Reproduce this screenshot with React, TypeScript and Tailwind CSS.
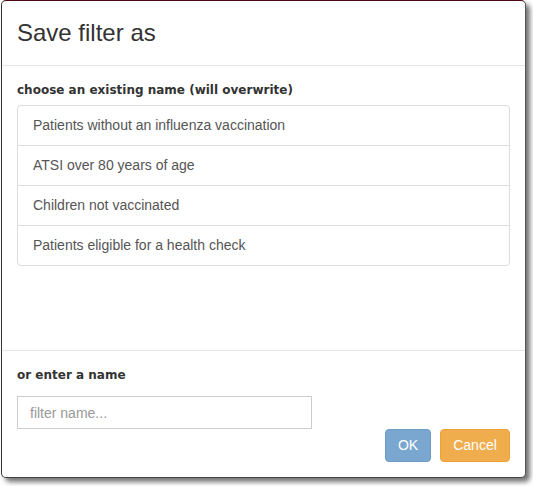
const existingNames = [
  "Patients without an influenza vaccination",
  "ATSI over 80 years of age",
  "Children not vaccinated",
  "Patients eligible for a health check",
];

export default function App() {
  return (
    <div className="w-[533px] h-[486px] bg-white font-['Liberation_Sans',Arial,sans-serif]">
      <div className="ml-px w-[525px] h-[478px] flex flex-col bg-white rounded-[5px] border-l border-l-[#333] border-t border-t-[#4a0a14] border-r border-r-[#555] border-b border-b-[#444] shadow-[4px_4px_5px_rgba(0,0,0,0.55)]">
        {/* Header */}
        <div className="h-[65px] flex items-center px-[15px] border-b border-[#e5e5e5]">
          <h4 className="text-[24px] text-[#333] leading-none pb-px">Save filter as</h4>
        </div>

        {/* Body */}
        <div className="flex-1 px-[15px] pt-[15px]">
          <div className="text-[12px] leading-[18px] font-bold text-[#333] font-['DejaVu_Sans',sans-serif]">
            choose an existing name (will overwrite)
          </div>
          <ul className="mt-[6px] border border-[#ddd] rounded-[4px]">
            {existingNames.map((name, i) => (
              <li
                key={name}
                className={`flex items-center px-[15px] text-[14px] text-[#555] ${i < existingNames.length - 1 ? "h-[40px] border-b border-[#ddd]" : "h-[39px]"}`}
              >
                {name}
              </li>
            ))}
          </ul>
        </div>

        {/* Footer */}
        <div className="h-[127px] border-t border-[#e5e5e5] px-[15px] pt-[15px]">
          <div className="text-[12px] leading-[18px] font-bold text-[#333] font-['DejaVu_Sans',sans-serif]">
            or enter a name
          </div>
          <input
            type="text"
            placeholder="filter name..."
            className="mt-[12px] block w-[295px] h-[33px] px-[12px] border border-[#ccc] text-[14px] text-[#555] placeholder:text-[#999] outline-none"
          />
          <div className="flex justify-end gap-[9px]">
            <button className="h-[33px] w-[46px] rounded-[4px] bg-[#7aa7cf] border border-[#6d9cc6] text-white text-[14px]">
              OK
            </button>
            <button className="h-[33px] w-[70px] rounded-[4px] bg-[#f0ad4e] border border-[#eea236] text-white text-[14px]">
              Cancel
            </button>
          </div>
        </div>
      </div>
    </div>
  );
}
